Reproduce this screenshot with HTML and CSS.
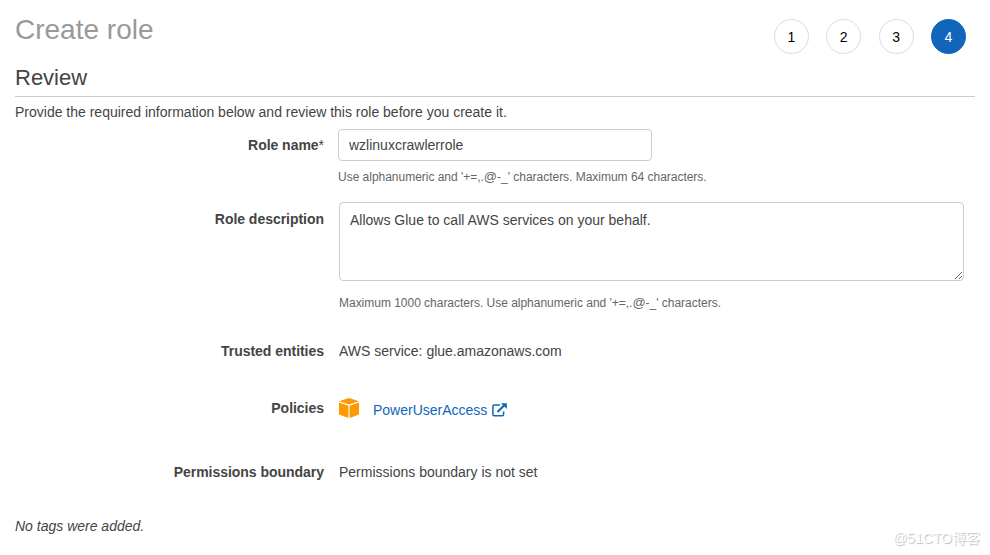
FILE: index.html
```html
<!DOCTYPE html>
<html lang="en">
<head>
<meta charset="utf-8">
<title>Create role</title>
<link rel="stylesheet" href="styles.css">
</head>
<body>
<main class="page">
  <header class="header">
    <h1 class="title">Create role</h1>
    <ol class="steps">
      <li class="step">1</li>
      <li class="step">2</li>
      <li class="step">3</li>
      <li class="step active">4</li>
    </ol>
  </header>
  <h2 class="subtitle">Review</h2>
  <p class="intro">Provide the required information below and review this role before you create it.</p>
  <form class="form">
    <div class="row row-name">
      <label class="label" for="name">Role name<span class="required">*</span></label>
      <div class="field">
        <input class="input" id="name" type="text" value="wzlinuxcrawlerrole">
        <p class="hint">Use alphanumeric and '+=,.<span class="at">@</span>-_' characters. Maximum 64 characters.</p>
      </div>
    </div>
    <div class="row row-description">
      <label class="label" for="description">Role description</label>
      <div class="field">
        <textarea class="textarea" id="description">Allows Glue to call AWS services on your behalf.</textarea>
        <p class="hint">Maximum 1000 characters. Use alphanumeric and '+=,.<span class="at">@</span>-_' characters.</p>
      </div>
    </div>
    <div class="row row-trusted">
      <span class="label">Trusted entities</span>
      <span class="field">AWS service: glue.amazonaws.com</span>
    </div>
    <div class="row row-policies">
      <span class="label">Policies</span>
      <div class="field policy">
        <svg class="cube" width="20" height="20" viewBox="0 0 20 20" fill="#ff9900">
          <path d="M0 3.2 10 0l10 3.2L10 6.6z"/>
          <path d="M0 4.5 9.4 7.7V20L0 16.6z"/>
          <path d="M20 4.5 10.6 7.7V20L20 16.6z"/>
        </svg>
        <a class="link" href="#">PowerUserAccess</a>
        <svg class="external" width="15" height="14" viewBox="0 0 15 14" fill="none" stroke="#1166bb">
          <path d="M8 2H2.2Q.9 2 .9 3.300V11.400Q.9 12.700 2.200 12.700H10.300Q11.600 12.700 11.600 11.400V8.500" stroke-width="1.5"/>
          <path d="M5.500 9 12 2.500" stroke-width="2.200"/>
          <path d="M9 .2h5.800V6z" fill="#1166bb" stroke="none"/>
        </svg>
      </div>
    </div>
    <div class="row row-boundary">
      <span class="label">Permissions boundary</span>
      <span class="field">Permissions boundary is not set</span>
    </div>
  </form>
  <p class="tags">No tags were added.</p>
</main>
<div class="watermark">@51CTO博客</div>
</body>
</html>
```
FILE: styles.css
```css
* { box-sizing: border-box; }
body {
  margin: 0;
  background: #fff;
  color: #444;
  font: 14px/20px "Liberation Sans", "Noto Sans CJK SC", sans-serif;
}
h1, h2, p, ol { margin: 0; padding: 0; font-weight: normal; }
.page { height: 555px; padding: 0 15px; overflow: hidden; }
.header { display: flex; justify-content: space-between; height: 62px; }
.title { padding-top: 14px; color: #999; font-size: 28px; line-height: 32px; }
.steps { display: flex; gap: 17.4px; padding: 19px 9px 0 0; list-style: none; }
.step {
  width: 35px;
  height: 35px;
  border: 1px solid #ddd;
  border-radius: 50%;
  color: #000;
  line-height: 35px;
  text-align: center;
}
.active { border-color: #1166bb; background: #1166bb; color: #fff; }
.subtitle { height: 35px; border-bottom: 1px solid #ccc; font-size: 22px; line-height: 32px; }
.intro { padding-top: 5px; height: 32px; }
.row { display: grid; grid-template-columns: 309px 1fr; column-gap: 15px; }
.row-name { height: 73px; }
.row-description { height: 139px; }
.row-trusted { height: 57px; }
.row-policies { height: 64px; }
.row-boundary { height: 54px; }
.label { font-weight: bold; text-align: right; letter-spacing: -0.03px; }
.row-name .label { padding-top: 6px; }
.row-description .label { padding-top: 7px; }
.required { font-weight: normal; }
.input {
  display: block;
  width: 314px;
  height: 32px;
  margin-left: -1px;
  padding: 0 10px;
  border: 1px solid #ccc;
  border-radius: 4px;
  background: #fff;
  color: #444;
  font: inherit;
}
.textarea {
  display: block;
  width: 625px;
  height: 79px;
  padding: 7px 10px;
  border: 1px solid #ccc;
  border-radius: 4px;
  background: #fff;
  color: #444;
  font: inherit;
  resize: vertical;
}
.hint { padding-top: 6px; color: #666; font-size: 12px; letter-spacing: -0.02px; }
.row-name .hint { margin-left: -1px; }
.row-description .hint { padding-top: 12px; }
.at { font-size: 13px; }
.policy { display: flex; align-items: flex-start; }
.link { margin: 2px 5px 0 14px; color: #1166bb; text-decoration: none; }
.external { margin-top: 5px; }
.tags { font-style: italic; }
.watermark {
  position: absolute;
  top: 528px;
  right: 10px;
  color: #fff;
  font-size: 14px;
  text-shadow: 1px 1px 1px #bbb;
}
```
